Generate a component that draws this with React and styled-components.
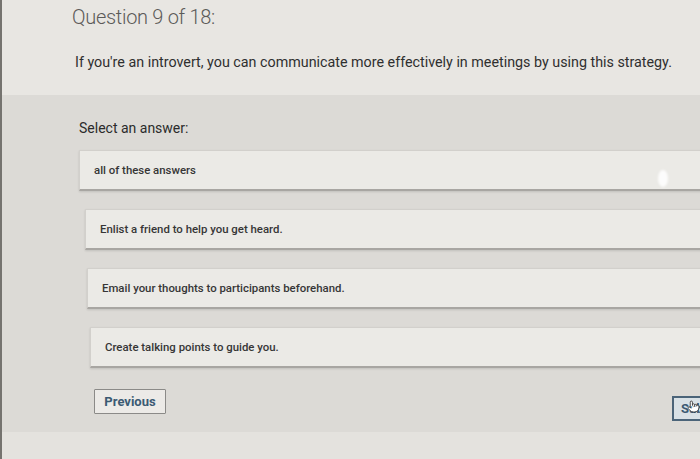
import React from 'react'
import styled, { createGlobalStyle } from 'styled-components'
import { Pointer } from 'lucide-react'

const GlobalStyle = createGlobalStyle`
    html, body {
        margin: 0;
        padding: 0;
        background: #dcdad6;
    }
    * {
        box-sizing: border-box;
    }
`

const options = [
    { text: 'all of these answers', indent: 0 },
    { text: 'Enlist a friend to help you get heard.', indent: 6 },
    { text: 'Email your thoughts to participants beforehand.', indent: 8 },
    { text: 'Create talking points to guide you.', indent: 11 },
]

const App = () => {
    return (
        <>
            <GlobalStyle />
            <Page>
                <Header>
                    <Title>Question 9 of 18:</Title>
                    <Prompt>If you're an introvert, you can communicate more effectively in meetings by using this strategy.</Prompt>
                </Header>

                <Body>
                    <Label>Select an answer:</Label>
                    <Options>
                        {options.map((option, index) => (
                            <Option key={index} $indent={option.indent}>
                                {option.text}
                            </Option>
                        ))}
                    </Options>

                    <Footer>
                        <PrevButton>Previous</PrevButton>
                        <SubmitButton>
                            Submit
                            <Cursor>
                                <Pointer size={13} strokeWidth={1.6} />
                            </Cursor>
                        </SubmitButton>
                    </Footer>

                    <Glare />
                </Body>

                <Bottom />
            </Page>
        </>
    )
}

export default App

const Page = styled.div`
    width: 700px;
    height: 459px;
    display: flex;
    flex-direction: column;
    border-left: 2px solid #75736f;
    overflow: hidden;
    font-family: "Liberation Sans", Arial, sans-serif;
`

const Header = styled.div`
    height: 95px;
    flex-shrink: 0;
    background: #e8e6e2;
    padding: 4px 0 0 70px;
`

const Title = styled.h1`
    margin: 0;
    font-family: Roboto, "Liberation Sans", sans-serif;
    font-weight: 300;
    font-size: 20px;
    line-height: 26px;
    color: #5b5a58;
    letter-spacing: -0.3px;
`

const Prompt = styled.p`
    margin: 24px 0 0 3px;
    font-family: Roboto, "Liberation Sans", sans-serif;
    font-size: 14.3px;
    line-height: 16px;
    color: #2f2f2f;
    white-space: nowrap;
`

const Body = styled.div`
    position: relative;
    flex: 1;
    background: #dcdad6;
    padding: 24px 0 0 77px;
`

const Label = styled.div`
    font-family: Roboto, "Liberation Sans", sans-serif;
    font-size: 14px;
    line-height: 18px;
    color: #2b2b2b;
`

const Options = styled.div`
    display: flex;
    flex-direction: column;
    gap: 18px;
    margin-top: 13px;
`

const Option = styled.div`
    margin-left: ${p => p.$indent}px;
    width: 660px;
    height: 41px;
    display: flex;
    align-items: center;
    padding-left: 14px;
    background: #ebeae6;
    border: 1px solid #d2d0cc;
    border-bottom: 2px solid #a8a6a2;
    box-shadow: 0 1px 2px rgba(0, 0, 0, 0.12);
    font-family: Roboto, "Liberation Sans", sans-serif;
    font-weight: 500;
    font-size: 11.4px;
    color: #363636;
    white-space: nowrap;
`

const Footer = styled.div`
    display: flex;
    justify-content: space-between;
    align-items: flex-start;
    margin-top: 21px;
    padding-left: 15px;
    margin-right: -40px;
`

const PrevButton = styled.button`
    width: 72px;
    height: 25px;
    padding: 0;
    background: #eceae7;
    border: 1.5px solid #8b8a88;
    border-radius: 1px;
    font-family: Roboto, "Liberation Sans", sans-serif;
    font-weight: 700;
    font-size: 13px;
    color: #3b5a73;
`

const SubmitButton = styled.button`
    position: relative;
    width: 68px;
    height: 25px;
    margin-top: 7px;
    padding: 0 0 0 7px;
    text-align: left;
    background: #d9e1e6;
    border: 2px solid #4b6479;
    font-family: Roboto, "Liberation Sans", sans-serif;
    font-weight: 700;
    font-size: 13px;
    color: #3b5a73;
`

const Cursor = styled.span`
    position: absolute;
    left: 13px;
    top: 2px;
    color: #333;
    display: flex;

    svg {
        fill: #fff;
    }
`

const Glare = styled.div`
    position: absolute;
    left: 656px;
    top: 75px;
    width: 10px;
    height: 17px;
    border-radius: 50%;
    background: rgba(255, 255, 255, 0.85);
    filter: blur(1px);
`

const Bottom = styled.div`
    height: 27px;
    flex-shrink: 0;
    background: #e4e2de;
`
